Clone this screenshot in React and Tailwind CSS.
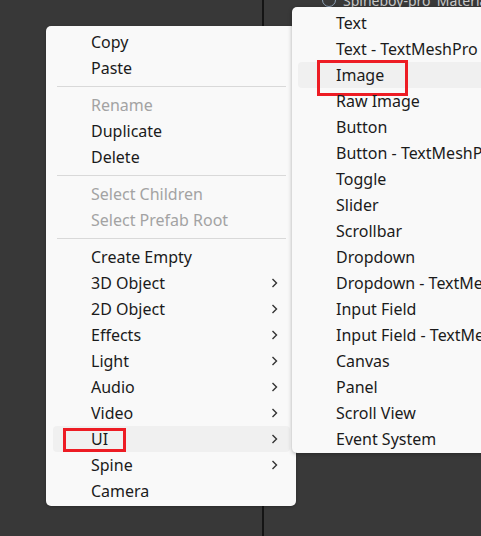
import React from 'react';

const mainItems = [
  { label: 'Copy' },
  { label: 'Paste' },
  { sep: true },
  { label: 'Rename', disabled: true },
  { label: 'Duplicate' },
  { label: 'Delete' },
  { sep: true },
  { label: 'Select Children', disabled: true },
  { label: 'Select Prefab Root', disabled: true },
  { sep: true },
  { label: 'Create Empty' },
  { label: '3D Object', sub: true },
  { label: '2D Object', sub: true },
  { label: 'Effects', sub: true },
  { label: 'Light', sub: true },
  { label: 'Audio', sub: true },
  { label: 'Video', sub: true },
  { label: 'UI', sub: true, active: true, marked: true },
  { label: 'Spine', sub: true },
  { label: 'Camera' },
];

const uiItems = [
  'Text',
  'Text - TextMeshPro',
  'Image',
  'Raw Image',
  'Button',
  'Button - TextMeshPro',
  'Toggle',
  'Slider',
  'Scrollbar',
  'Dropdown',
  'Dropdown - TextMeshPro',
  'Input Field',
  'Input Field - TextMeshPro',
  'Canvas',
  'Panel',
  'Scroll View',
  'Event System',
];

const Chevron = () => (
  <svg width="7" height="10" viewBox="0 0 7 10" className="shrink-0">
    <polyline points="1.5,1 5.5,5 1.5,9" fill="none" stroke="#333" strokeWidth="1.4" />
  </svg>
);

export default function App() {
  return (
    <div
      className="relative w-[481px] h-[536px] overflow-hidden bg-[#383838] flex"
      style={{ fontFamily: '"Noto Sans", "Noto Sans CJK SC", sans-serif' }}
    >
      {/* editor panels behind the menu */}
      <div className="w-[264px] shrink-0 h-full border-r-2 border-[#141414]" />
      <div className="flex-1 min-w-0 overflow-hidden h-full bg-[#393939]">
        <div className="flex items-center gap-[7px] pl-[58px] -mt-[12px] h-[24px]">
          <div className="shrink-0 w-[14px] h-[14px] rounded-full border-[1.5px] border-[#8fa3b8]" />
          <span className="text-[14px] text-[#c8c8c8] whitespace-nowrap">Spineboy-pro_Material</span>
        </div>
      </div>

      {/* main context menu */}
      <div className="absolute left-[46px] top-[26px] w-[250px] flex flex-col pt-[3px] pb-[2px] bg-[#f9f9f9] rounded-[5px] shadow-[0_1px_3px_rgba(0,0,0,0.25)]">
        {mainItems.map((item, i) =>
          item.sep ? (
            <div key={i} className="h-[11px] pt-[5px] pl-[11px] pr-[10px]">
              <div className="h-px bg-[#d9d9d9]" />
            </div>
          ) : (
            <div key={i} className="h-[26px] pl-[7px] pr-[6px]">
              <div
                className={`relative h-full flex items-center justify-between pl-[38px] pr-[12px] rounded-[4px] text-[16px] ${item.active ? 'bg-[#f0f0f0]' : ''} ${item.disabled ? 'text-[#a3a3a3]' : 'text-[#1b1b1b]'}`}
              >
                <span>{item.label}</span>
                {item.sub && <Chevron />}
                {item.marked && <div className="absolute left-[10px] top-[2px] w-[63px] h-[24px] border-[3px] border-[#ed1c24]" />}
              </div>
            </div>
          )
        )}
      </div>

      {/* UI submenu */}
      <div className="absolute left-[292px] top-[7px] w-[210px] flex flex-col pt-[3px] pb-px bg-[#f9f9f9] rounded-[5px] shadow-[0_1px_4px_rgba(0,0,0,0.3)]">
        {uiItems.map((label, i) => (
          <div key={i} className="h-[26px] pl-[6px]">
            <div
              className={`relative h-full flex items-center pl-[38px] rounded-l-[4px] text-[16px] text-[#1b1b1b] whitespace-nowrap ${label === 'Image' ? 'bg-[#f0f0f0]' : ''}`}
            >
              {label}
              {label === 'Image' && <div className="absolute left-[19px] top-[-2px] w-[91px] h-[36px] border-[3px] border-[#ed1c24]" />}
            </div>
          </div>
        ))}
      </div>
    </div>
  );
}
